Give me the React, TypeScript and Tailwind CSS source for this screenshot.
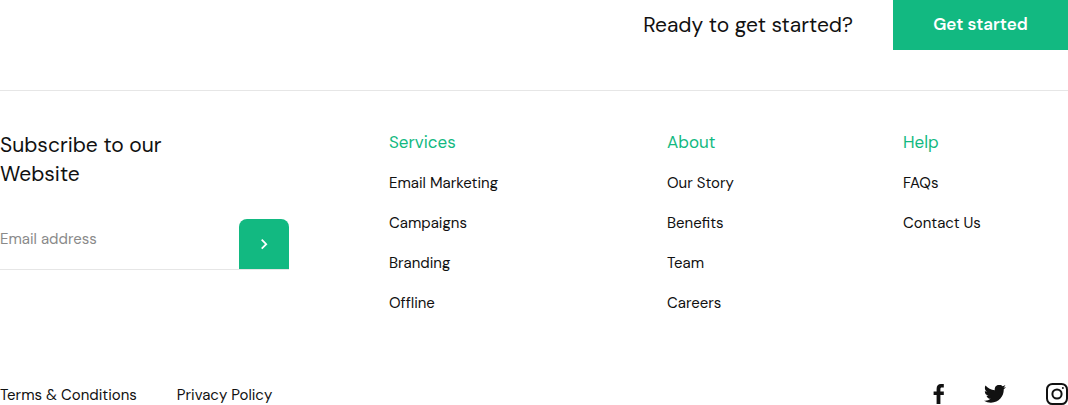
import React from "react";

const columns = [
  { title: "Services", links: ["Email Marketing", "Campaigns", "Branding", "Offline"] },
  { title: "About", links: ["Our Story", "Benefits", "Team", "Careers"] },
  { title: "Help", links: ["FAQs", "Contact Us"] },
];

function Facebook() {
  return (
    <svg className="h-5 w-[11px]" viewBox="0 0 11 20" fill="currentColor" aria-hidden="true">
      <path d="M3.600 20V11H.6V7.500H3.600V5C3.600 1.800 5.200 0 7.900 0H10.800V3.400H9C7.700 3.400 7.400 4 7.400 5V7.500H10.800V11H7.400V20Z" />
    </svg>
  );
}

function Twitter() {
  return (
    <svg className="h-[18px] w-[22px]" viewBox="0 2.500 24 19.600" fill="currentColor" aria-hidden="true">
      <path d="M24 4.557a9.83 9.83 0 0 1-2.828.775 4.932 4.932 0 0 0 2.165-2.724 9.864 9.864 0 0 1-3.127 1.195 4.916 4.916 0 0 0-8.384 4.482C7.691 8.094 4.066 6.13 1.64 3.161a4.822 4.822 0 0 0-.666 2.475c0 1.71.87 3.213 2.188 4.096a4.904 4.904 0 0 1-2.228-.616v.06a4.923 4.923 0 0 0 3.946 4.827 4.996 4.996 0 0 1-2.212.085 4.936 4.936 0 0 0 4.604 3.417A9.867 9.867 0 0 1 0 19.54a13.995 13.995 0 0 0 7.548 2.212c9.142 0 14.307-7.721 13.995-14.646A10.025 10.025 0 0 0 24 4.557z" />
    </svg>
  );
}

function Instagram() {
  return (
    <svg className="size-[22px]" viewBox="0 0 22 22" fill="none" stroke="currentColor" strokeWidth="2" aria-hidden="true">
      <rect x="1" y="1" width="20" height="20" rx="5.4" />
      <circle cx="11" cy="11" r="4.6" />
      <circle cx="16.9" cy="5.1" r="1" fill="currentColor" stroke="none" />
    </svg>
  );
}

export default function App() {
  return (
    <div className="bg-white font-['DM_Sans','Inter',sans-serif] text-[#111111]">
      <section className="flex items-center justify-end gap-10 border-b border-[#e6e6e6] pb-10">
        <h2 className="text-[21px] leading-7">Ready to get started?</h2>
        <button type="button" className="h-[50px] w-[175px] bg-[#12b981] text-[17px] font-semibold text-white">
          Get started
        </button>
      </section>

      <footer>
        <div className="grid grid-cols-[389fr_278fr_236fr_165fr] pt-10">
          <form className="mr-[100px]" onSubmit={(e) => e.preventDefault()}>
            <h3 className="max-w-[200px] text-[21px] leading-[29px]">Subscribe to our Website</h3>
            <div className="mt-[30px] flex border-b border-[#e6e6e6]">
              <input
                type="email"
                aria-label="Email address"
                placeholder="Email address"
                className="h-10 min-w-0 flex-1 text-[15px] outline-none placeholder:text-[#8a8a8a]"
              />
              <button
                type="submit"
                aria-label="Subscribe"
                className="flex size-[50px] items-center justify-center rounded-t-lg bg-[#12b981] text-white"
              >
                <svg className="h-3 w-2" viewBox="0 0 8 12" fill="none" stroke="currentColor" strokeWidth="1.8" aria-hidden="true">
                  <path d="M1.700 1.700 6.200 6.200l-4.500 4.500" />
                </svg>
              </button>
            </div>
          </form>
          {columns.map((column) => (
            <nav key={column.title} aria-label={column.title}>
              <h3 className="text-[17px] leading-[22px] text-[#12b981]">{column.title}</h3>
              <ul className="mt-5 space-y-5 text-[15px] leading-5">
                {column.links.map((link) => (
                  <li key={link}>
                    <a href="#">{link}</a>
                  </li>
                ))}
              </ul>
            </nav>
          ))}
        </div>

        <div className="flex items-end justify-between pt-[70px]">
          <div className="flex gap-10 text-[15px] leading-5">
            <a href="#">Terms &amp; Conditions</a>
            <a href="#">Privacy Policy</a>
          </div>
          <div className="flex items-center gap-10">
            <a href="#" aria-label="Facebook"><Facebook /></a>
            <a href="#" aria-label="Twitter"><Twitter /></a>
            <a href="#" aria-label="Instagram"><Instagram /></a>
          </div>
        </div>
      </footer>
    </div>
  );
}
